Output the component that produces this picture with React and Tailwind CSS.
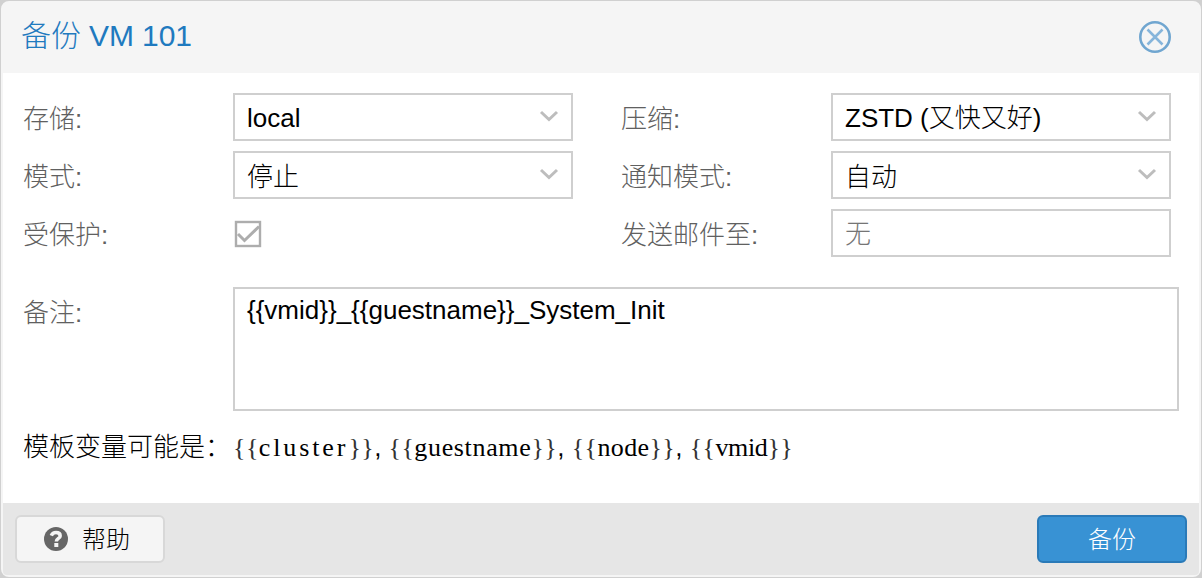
import React from "react";

function Chevron() {
  return (
    <svg className="h-[14px] w-[20px] shrink-0" viewBox="0 0 20 14" fill="none" stroke="#bdbdbd" strokeWidth="3">
      <path d="M2 2 L10 9.5 L18 2" />
    </svg>
  );
}

function Label({ children, className = "" }) {
  return (
    <label className={`flex h-12 shrink-0 items-center whitespace-nowrap pt-1 text-[26px] leading-none text-[#606060] ${className}`}>
      {children}
    </label>
  );
}

function Select({ value, offset = "pt-[3px]" }) {
  return (
    <div className="flex h-12 w-[340px] items-center justify-between border-2 border-[#cfcfcf] bg-white pr-3 pl-3">
      <span className={`whitespace-nowrap text-[26px] leading-none text-black ${offset}`}>{value}</span>
      <Chevron />
    </div>
  );
}

function TemplateVar({ name, tracking }) {
  return (
    <code className="font-['Liberation_Serif',serif]">
      <span className="tracking-[0.4px] text-[#333333]">{"{{"}</span>
      <span className={tracking}>{name}</span>
      <span className="tracking-[0.4px] text-[#333333]">{"}}"}</span>
    </code>
  );
}

function Footer() {
  return (
    <footer className="flex h-[72px] shrink-0 items-center justify-between rounded-b-[4px] bg-[#e6e6e6] px-3">
      <button className="flex h-12 w-[150px] items-center rounded-[6px] border-2 border-[#d8d8d8] bg-[#f5f5f5] pl-[27px] text-2xl leading-none text-black">
        <svg className="mr-[14px] h-6 w-6" viewBox="0 0 24 24">
          <circle cx="12" cy="12" r="12" fill="#666666" />
          <path d="M7.3 8.6 C8.3 6.4 9.8 5.6 12 5.6 C14.6 5.6 16.2 7 16.2 8.9 C16.2 11.5 12.3 11.4 12.3 14.5" fill="none" stroke="#f5f5f5" strokeWidth="3.5" />
          <rect x="10.3" y="16" width="4" height="4" fill="#f5f5f5" />
        </svg>
        <span className="pt-0.5">帮助</span>
      </button>
      <button className="flex h-12 w-[150px] items-center justify-center rounded-[6px] border-2 border-[#2a7ab8] bg-[#3892d4] pt-0.5 text-2xl leading-none text-white">
        备份
      </button>
    </footer>
  );
}

export default function App() {
  return (
    <div className="h-[578px] w-[1202px] bg-[#d0d0d0] p-px font-['Liberation_Sans','Noto_Sans_CJK_SC',sans-serif] font-light">
      <section className="flex h-[576px] w-[1200px] flex-col rounded-[8px] border-2 border-[#f5f5f5] bg-[#f5f5f5]">
        <header className="flex h-[70px] shrink-0 items-center justify-between pr-7 pb-[3px] pl-[18px]">
          <h1 className="whitespace-nowrap pb-0.5 text-[30px] leading-none tracking-[-0.1px] text-[#1f7abf]">备份 VM 101</h1>
          <button aria-label="关闭">
            <svg className="h-8 w-8" viewBox="0 0 32 32" fill="none">
              <circle cx="16" cy="16" r="14.7" stroke="#70a6d0" strokeWidth="2.6" />
              <path d="M8.5 8.5 L23.5 23.5 M23.5 8.5 L8.5 23.5" stroke="#86b5db" strokeWidth="2.6" />
            </svg>
          </button>
        </header>

        <main className="flex flex-1 flex-col bg-white pt-5 pl-5">
          <div className="flex">
            <div className="grid grid-cols-[210px_340px] gap-y-2.5">
              <Label>存储:</Label>
              <Select value="local" offset="pt-px" />
              <Label>模式:</Label>
              <Select value="停止" />
              <Label>受保护:</Label>
              <div className="flex items-center pt-0.5 pl-px">
                <svg className="h-7 w-7" viewBox="0 0 28 28" fill="none" stroke="#adadad">
                  <rect x="2" y="2" width="24" height="24" strokeWidth="2.4" />
                  <path d="M4 14 L10.5 20.5 L25 6.5" strokeWidth="3" />
                </svg>
              </div>
            </div>
            <div className="ml-12 grid grid-cols-[210px_340px] gap-y-2.5">
              <Label>压缩:</Label>
              <Select value="ZSTD (又快又好)" offset="pt-px" />
              <Label>通知模式:</Label>
              <Select value="自动" />
              <Label>发送邮件至:</Label>
              <input
                className="h-12 w-[340px] border-2 border-[#cfcfcf] bg-white px-3 pt-0.5 text-[26px] leading-none placeholder:text-[#757575]"
                placeholder="无"
              />
            </div>
          </div>

          <div className="mt-[30px] flex">
            <Label className="w-[210px]">备注:</Label>
            <textarea
              className="h-[124px] w-[946px] resize-none border-2 border-[#cfcfcf] bg-white px-3 py-1.5 text-[26px] leading-[30px] text-black"
              defaultValue="{{vmid}}_{{guestname}}_System_Init"
            />
          </div>

          <p className="mt-[18px] flex h-9 items-center whitespace-pre text-[26px] leading-none text-black">
            <span className="w-[210px]">模板变量可能是：</span>
            <span>
              <TemplateVar name="cluster" tracking="tracking-[2.9px]" />
              {", "}
              <TemplateVar name="guestname" tracking="tracking-[0.65px]" />
              {", "}
              <TemplateVar name="node" tracking="tracking-[0.38px]" />
              {", "}
              <TemplateVar name="vmid" tracking="tracking-[-0.36px]" />
            </span>
          </p>
        </main>

        <Footer />
      </section>
    </div>
  );
}
